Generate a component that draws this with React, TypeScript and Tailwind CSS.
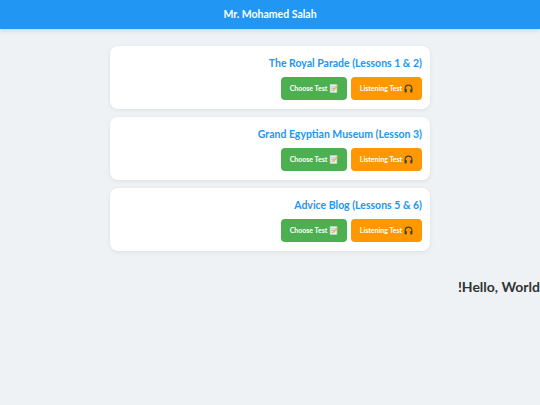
export default function App() {
  const cards = ["The Royal Parade (Lessons 1 & 2)", "Grand Egyptian Museum (Lesson 3)", "Advice Blog (Lessons 5 & 6)"];
  const Memo = () => (
    <svg width="9" height="9" viewBox="0 0 16 16" className="inline-block">
      <rect x="2" y="1" width="12" height="14" fill="#e8f1f5" stroke="#c9d6dc" />
      <path d="M4 5h8M4 8h8M4 11h6" stroke="#8fa3ad" strokeWidth="1" />
      <path d="M14 2l2 2-7 8-3 1 1-3z" fill="#f6b73c" />
    </svg>
  );
  const Phones = () => (
    <svg width="9" height="9" viewBox="0 0 16 16" className="inline-block">
      <path d="M2 10V8a6 6 0 0 1 12 0v2" fill="none" stroke="#3f3f3f" strokeWidth="2" />
      <rect x="1" y="9" width="4" height="6" rx="1.5" fill="#3f3f3f" />
      <rect x="11" y="9" width="4" height="6" rx="1.5" fill="#3f3f3f" />
    </svg>
  );
  return (
    <div dir="rtl" className="min-h-[405px] bg-[#eef2f5] overflow-hidden font-['Lato',sans-serif]">
      <header className="h-[29px] bg-[#2196f3] shadow-[0_2px_4px_rgba(0,0,0,0.1)] flex items-center justify-center text-white font-bold text-[10.5px]">
        Mr. Mohamed Salah
      </header>
      <main className="w-[320px] mx-auto pt-[17px] flex flex-col gap-[8.5px]">
        {cards.map((c) => (
          <section key={c} className="bg-white rounded-lg shadow-[0_1px_4px_rgba(0,0,0,0.08)] h-[62.5px] px-2 pt-[9px]">
            <h2 dir="ltr" className="text-right text-[#2196f3] font-bold text-[10.5px] leading-[16px]">{c}</h2>
            <div className="flex gap-1 mt-[6px]">
              <button dir="ltr" className="w-[71px] h-[23px] rounded bg-[#ff9800] text-white font-bold text-[7px] flex items-center justify-center gap-[2px]">
                Listening Test <Phones />
              </button>
              <button dir="ltr" className="w-[66px] h-[23px] rounded bg-[#4caf50] text-white font-bold text-[7px] flex items-center justify-center gap-[2px]">
                Choose Test <Memo />
              </button>
            </div>
          </section>
        ))}
      </main>
      <h1 className="mt-[26px] text-[#333] font-bold text-[14px] leading-[20px] text-right">Hello, World!</h1>
    </div>
  );
}
